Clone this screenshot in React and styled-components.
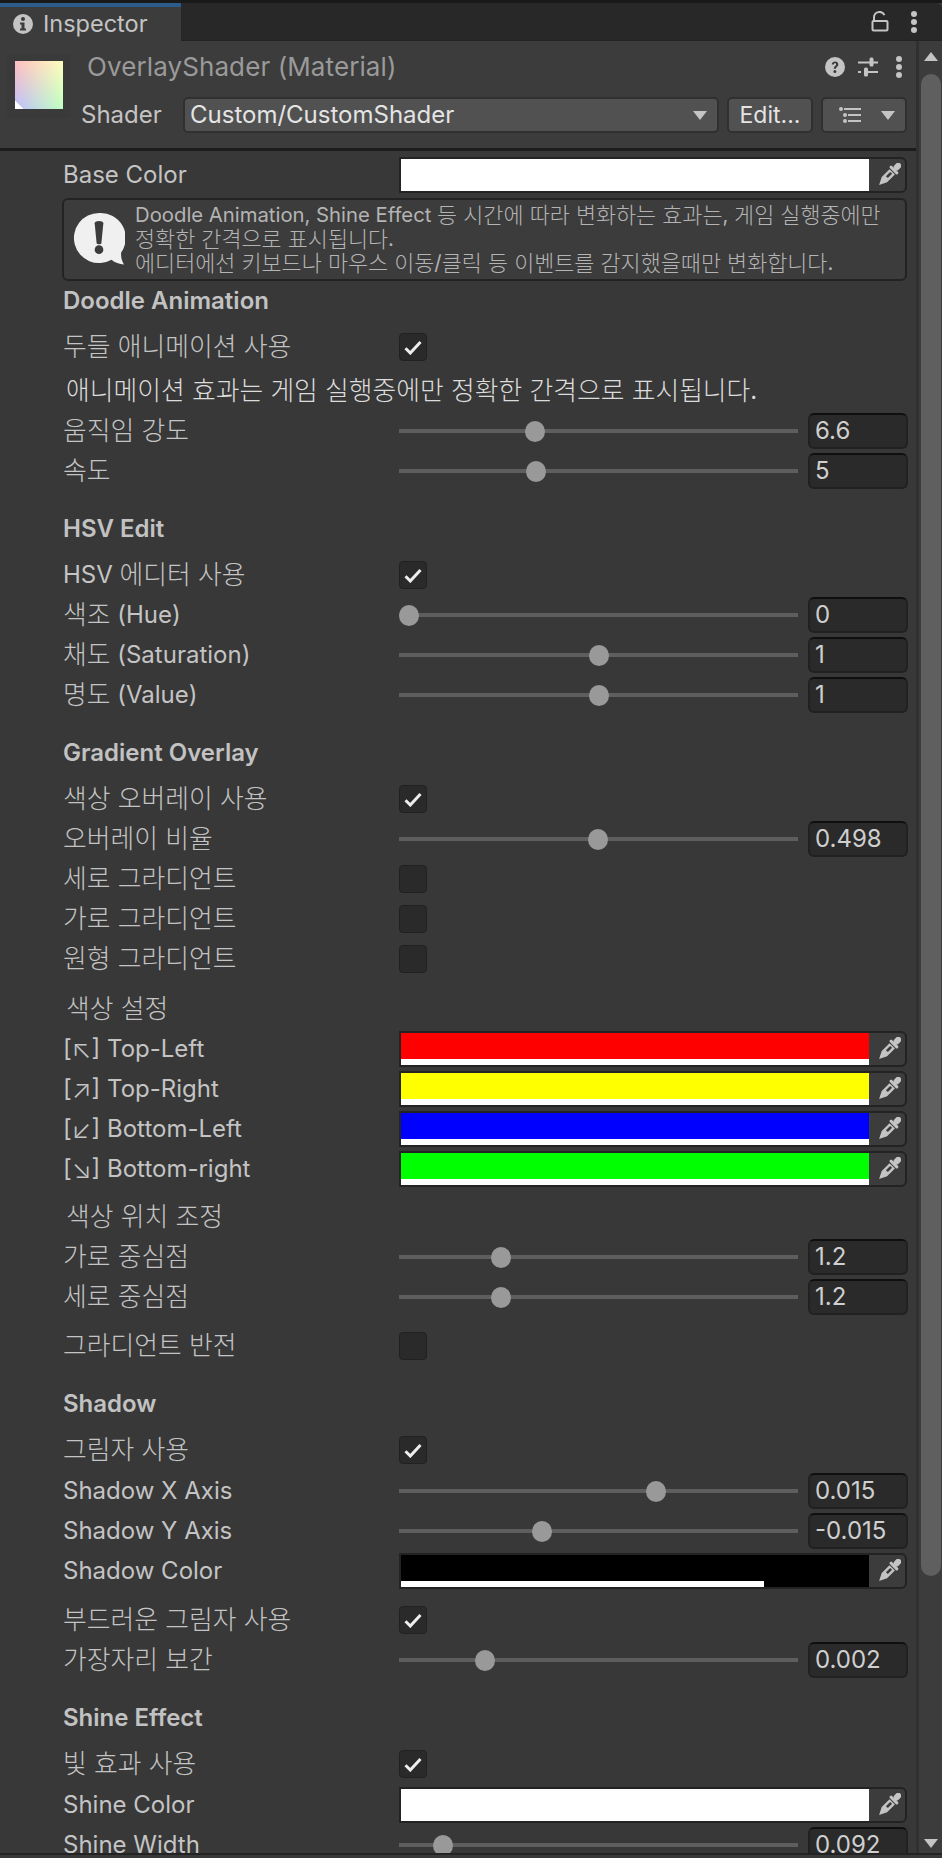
import React from "react";
import styled, { createGlobalStyle } from "styled-components";

const Global = createGlobalStyle`
  html, body { margin: 0; padding: 0; background: #383838; }
  * { box-sizing: border-box; }
`;
const Page = styled.div`
  width: 942px; height: 1858px; overflow: hidden; display: flex; flex-direction: column;
  background: #383838; color: #c4c4c4;
  font-family: Inter, "Noto Sans CJK KR", sans-serif; font-size: 24px; line-height: 1;
`;
const Ko = styled.span`font-size: 1.075em; font-weight: 300; line-height: 1; vertical-align: -1px;`;
const TopStrip = styled.div`height: 3px; background: #191919; flex: none;`;
const TabBar = styled.div`
  height: 38px; flex: none; background: #282828; display: flex; align-items: stretch; justify-content: space-between;
  border-top-right-radius: 6px; border-bottom: 1px solid #232323;
`;
const Tab = styled.div`
  width: 181px; background: #3c3c3c; border-top: 4px solid #2c5d8a; display: flex; align-items: center; gap: 10px;
  padding-left: 13px; font-size: 23.5px; color: #c4c4c4; margin-bottom: -1px;
`;
const TabTools = styled.div`display: flex; align-items: center; gap: 21px; padding-right: 24px;`;
const Main = styled.div`flex: 1; min-height: 0; display: flex;`;
const Content = styled.div`flex: 1; min-width: 0; overflow: hidden; display: flex; flex-direction: column;`;
const Header = styled.header`
  height: 110px; flex: none; background: #3c3c3c; border-bottom: 3px solid #1d1d1d; position: relative;
  display: flex; padding: 13px 9px 0 7px;
`;
const ThumbFrame = styled.div`
  width: 64px; height: 64px; flex: none; background: #3a3a3a; padding: 7px 8px;
`;
const Thumb = styled.div`
  width: 48px; height: 48px; position: relative; background: linear-gradient(to right, #ffbfbf, #ffffbf);
  &::before {
    content: ""; position: absolute; inset: 0; background: linear-gradient(to right, #bfbfff, #bfffbf);
    -webkit-mask-image: linear-gradient(to bottom, transparent, #000); mask-image: linear-gradient(to bottom, transparent, #000);
  }
  &::after {
    content: ""; position: absolute; left: 0; bottom: 0; width: 8px; height: 8px;
    background: linear-gradient(to top right, #fff 50%, transparent 50%);
  }
`;
const HeadBody = styled.div`flex: 1; min-width: 0; display: flex; flex-direction: column; padding-left: 10px;`;
const TitleRow = styled.div`height: 26px; display: flex; align-items: center; justify-content: space-between;`;
const Title = styled.div`color: #9a9a9a; font-size: 26px; padding-left: 6px; letter-spacing: 0.1px; white-space: nowrap;`;
const HeadTools = styled.div`display: flex; align-items: center; gap: 12px; padding-right: 4px;`;
const MenuDots = styled.div`display: flex; margin-left: 4px;`;
const ShaderRow = styled.div`margin-top: 17px; display: flex; align-items: center; gap: 8px;`;
const ShaderLabel = styled.div`width: 94px; flex: none; font-size: 24px; color: #c4c4c4;`;
const HeadBtn = styled.div`
  height: 36px; background: #515151; border: 2px solid #303030; border-radius: 5px; display: flex; align-items: center;
  color: #e4e4e4; font-size: ${p => p.$size || 24}px; flex: ${p => p.$grow ? 1 : "none"}; width: ${p => p.$w || "auto"};
  justify-content: ${p => p.$between ? "space-between" : "center"}; padding: ${p => p.$pad || "0"};
`;
const BtnGroup = styled.div`flex: none; display: flex; gap: 8px;`;
const Body = styled.div`padding: 4px 9px 0 63px; flex: 1; overflow: hidden;`;
const Row = styled.div`
  height: 40px; display: flex; align-items: center; margin-top: ${p => p.$mt || 0}px;
`;
const Label = styled.div`width: 336px; flex: none; white-space: nowrap; height: 40px; line-height: 40px;`;
const Heading = styled.div`
  height: 40px; line-height: 40px; font-weight: 600; font-size: 24px; color: #c2c2c2; margin-top: ${p => p.$mt || 0}px;
`;
const Note = styled.div`
  height: 40px; line-height: 40px; padding-left: 3px; margin-top: ${p => p.$mt || 0}px;
  color: ${p => p.$bright ? "#dcdcdc" : "#c4c4c4"}; white-space: nowrap;
`;
const Help = styled.div`
  height: 83px; margin: 3px 0 0 -1px; background: #3c3c3c; border: 2px solid #232323; border-radius: 6px; display: flex; align-items: center;
  padding-left: 9px; gap: 10px;
`;
const HelpText = styled.div`font-size: 20.3px; line-height: 23.5px; color: #b4b4b4; margin-top: -1px; white-space: nowrap;`;
const Check = styled.div`
  width: 28px; height: 28px; border-radius: 4px; background: #2a2a2a; border: 1px solid #212121; display: flex; align-items: center; justify-content: center;
`;
const Slider = styled.div`display: flex; align-items: center; flex: 1; gap: 10px;`;
const Track = styled.div`width: 399px; height: 4px; background: #5e5e5e; position: relative; flex: none;`;
const Knob = styled.div`position: absolute; top: -8.5px; width: 20px; height: 21px; border-radius: 50%; background: #999;`;
const NumInput = styled.div`
  width: 100px; height: 36px; flex: none; background: #2a2a2a; border: 2px solid #212121; border-top-color: #0f0f0f; border-radius: 6px;
  display: flex; align-items: center; padding-left: 5px; font-size: 24px; color: #cfcfcf;
`;
const ColorField = styled.div`
  flex: 1; height: 36px; display: flex; background: #232323; border: 2px solid #232323; border-radius: 0 6px 6px 0;
`;
const SwatchWrap = styled.div`flex: 1; background: ${p => p.$color}; display: flex; flex-direction: column; justify-content: flex-end;`;
const AlphaBar = styled.div`height: 6px; background: #fff; width: ${p => p.$w || "100%"};`;
const Picker = styled.div`width: 36px; background: #3c3c3c; display: flex; align-items: center; justify-content: center; flex: none; border-radius: 0 4px 4px 0; padding-left: 3px;`;
const Scroll = styled.aside`
  width: 26px; flex: none; background: #3c3c3c; border-left: 3px solid #303030; display: flex; flex-direction: column; align-items: center;
  padding-bottom: 5px;
`;
const ScrollThumb = styled.div`width: 20px; height: 1502px; margin-top: 13px; border-radius: 10px; background: #5f5f5f;`;
const Spacer = styled.div`flex: 1;`;
const ArrowUp = styled.div`
  margin-top: 11px; width: 0; height: 0; border-left: 7.5px solid transparent; border-right: 7.5px solid transparent; border-bottom: 9px solid #c4c4c4;
`;
const ArrowDown = styled.div`
  width: 0; height: 0; border-left: 7.5px solid transparent; border-right: 7.5px solid transparent; border-top: 9px solid #c4c4c4;
`;
const Caret = styled.div`
  width: 0; height: 0; border-left: 7.5px solid transparent; border-right: 7.5px solid transparent; border-top: 9px solid #c4c4c4;
`;
const Footer = styled.div`height: 5px; flex: none; background: #383838; border-top: 2px solid #232323;`;

const K = ({ children }) => {
  const parts = children.split(/([\uAC00-\uD7A3\u2196-\u2199]+(?:\s+[\uAC00-\uD7A3]+)*)/);
  return parts.map((p, i) => (i % 2 ? <Ko key={i}>{p}</Ko> : p));
};

const Dots = ({ color = "#c4c4c4" }) => (
  <svg width="8" height="22" viewBox="0 0 8 22"><circle cx="4" cy="3" r="3" fill={color} /><circle cx="4" cy="11" r="3" fill={color} /><circle cx="4" cy="19" r="3" fill={color} /></svg>
);
const Lock = () => (
  <svg width="18" height="21" viewBox="0 0 18 21" fill="none" stroke="#c4c4c4" strokeWidth="2">
    <rect x="1.500" y="10" width="15" height="9.500" rx="1" />
    <path d="M3 10V6.500a5.500 5.500 0 0 1 10.500-2.300" />
  </svg>
);
const InfoIcon = () => (
  <svg width="20" height="20" viewBox="0 0 20 20">
    <circle cx="10" cy="10" r="10" fill="#c4c4c4" />
    <circle cx="10" cy="5" r="2" fill="#3c3c3c" />
    <path d="M7 8.500h4.500v6H13v2H7v-2h1.500v-4H7z" fill="#3c3c3c" />
  </svg>
);
const HelpCircle = () => (
  <svg width="20" height="20" viewBox="0 0 20 20">
    <circle cx="10" cy="10" r="10" fill="#c4c4c4" />
    <path d="M6.800 7.600C6.800 5.600 8.300 4.600 10.100 4.600s3.200 1 3.200 2.800c0 2.400-2.400 2.400-2.400 4.400H8.800c0-2.900 2.300-3 2.300-4.400 0-.7-.4-1.100-1.100-1.100-.8 0-1.200.5-1.200 1.300z" fill="#3c3c3c" />
    <circle cx="9.900" cy="14.400" r="1.500" fill="#3c3c3c" />
  </svg>
);
const Sliders = () => (
  <svg width="22" height="20" viewBox="0 0 22 20" fill="#c4c4c4">
    <rect x="1" y="4.500" width="20" height="2" /><rect x="1" y="14" width="3" height="2" /><rect x="7" y="14" width="14" height="2" />
    <rect x="12.500" y="0.500" width="4" height="9" rx="1.500" /><rect x="7" y="10.500" width="4" height="9" rx="1.500" />
  </svg>
);
const ListIcon = () => (
  <svg width="22" height="16" viewBox="0 0 22 16" fill="#c4c4c4">
    <circle cx="2" cy="2" r="2" /><circle cx="6" cy="8" r="2" /><circle cx="6" cy="14" r="2" />
    <rect x="5" y="1" width="17" height="2" /><rect x="9" y="7" width="13" height="2" /><rect x="9" y="13" width="13" height="2" />
  </svg>
);
const Dropper = () => (
  <svg width="24" height="24" viewBox="0 0 24 24">
    <g transform="rotate(45 12 12)" fill="#c4c4c4">
      <rect x="9" y="-4" width="6" height="8" rx="2.500" />
      <rect x="6.500" y="3.500" width="11" height="3" rx="1.200" />
      <path d="M8.200 7.500h7.600v11L12 26l-3.800-7.500z" />
      <rect x="10.600" y="9" width="2.800" height="6" fill="#3c3c3c" />
    </g>
  </svg>
);
const Tick = () => (
  <svg width="18" height="15" viewBox="0 0 18 15" fill="none" stroke="#eee" strokeWidth="3"><path d="M1.500 8.300 6.300 13 16.500 2" /></svg>
);
const Bubble = () => (
  <svg width="52" height="56" viewBox="0 0 54 58">
    <path d="M27 1a26 26 0 1 0 13 48.500c3.500 3 8 4.500 13 5-1.800-3-3.500-6.500-3-12.500A26 26 0 0 0 27 1z" fill="#f0f0f0" />
    <path d="M22.500 11.500c0-3 9-3 9 0l-2 20.500c-.3 2-4.700 2-5 0z" fill="#3c3c3c" />
    <circle cx="27" cy="39" r="4.500" fill="#3c3c3c" />
  </svg>
);

const CheckRow = ({ label, on, mt }) => (
  <Row $mt={mt}><Label><K>{label}</K></Label><Check>{on && <Tick />}</Check></Row>
);
const SliderRow = ({ label, value, center, mt }) => (
  <Row $mt={mt}>
    <Label><K>{label}</K></Label>
    <Slider>
      <Track><Knob style={{ left: center - 10 }} /></Track>
      <NumInput>{value}</NumInput>
    </Slider>
  </Row>
);
const ColorRow = ({ label, color, bar, barW, mt }) => (
  <Row $mt={mt}>
    <Label><K>{label}</K></Label>
    <ColorField>
      <SwatchWrap $color={color}>{bar && <AlphaBar $w={barW} />}</SwatchWrap>
      <Picker><Dropper /></Picker>
    </ColorField>
  </Row>
);

export default function App() {
  return (
    <Page>
      <Global />
      <TopStrip />
      <TabBar>
        <Tab><InfoIcon />Inspector</Tab>
        <TabTools><Lock /><Dots /></TabTools>
      </TabBar>
      <Main>
        <Content>
          <Header>
            <ThumbFrame><Thumb /></ThumbFrame>
            <HeadBody>
              <TitleRow>
                <Title>OverlayShader (Material)</Title>
                <HeadTools><HelpCircle /><Sliders /><MenuDots><Dots /></MenuDots></HeadTools>
              </TitleRow>
              <ShaderRow>
                <ShaderLabel>Shader</ShaderLabel>
                <HeadBtn $grow $between $pad="0 10px 0 5px">Custom/CustomShader<Caret /></HeadBtn>
                <BtnGroup>
                  <HeadBtn $w="86px" $size={23}>Edit...</HeadBtn>
                  <HeadBtn $w="86px" $between $pad="0 10px 0 16px"><ListIcon /><Caret /></HeadBtn>
                </BtnGroup>
              </ShaderRow>
            </HeadBody>
          </Header>
          <Body>
            <ColorRow label="Base Color" color="#fff" />
            <Help>
              <Bubble />
              <HelpText>
                <K>Doodle Animation, Shine Effect 등 시간에 따라 변화하는 효과는, 게임 실행중에만</K><br />
                <K>정확한 간격으로 표시됩니다.</K><br />
                <K>에디터에선 키보드나 마우스 이동/클릭 등 이벤트를 감지했을때만 변화합니다.</K>
              </HelpText>
            </Help>
            <Heading>Doodle Animation</Heading>
            <CheckRow label="두들 애니메이션 사용" on mt={6} />
            <Note $bright $mt={4}><K>애니메이션 효과는 게임 실행중에만 정확한 간격으로 표시됩니다.</K></Note>
            <SliderRow label="움직임 강도" value="6.6" center={136} />
            <SliderRow label="속도" value="5" center={137} />

            <Heading $mt={18}>HSV Edit</Heading>
            <CheckRow label="HSV 에디터 사용" on mt={6} />
            <SliderRow label="색조 (Hue)" value="0" center={10} />
            <SliderRow label="채도 (Saturation)" value="1" center={200} />
            <SliderRow label="명도 (Value)" value="1" center={200} />

            <Heading $mt={18}>Gradient Overlay</Heading>
            <CheckRow label="색상 오버레이 사용" on mt={6} />
            <SliderRow label="오버레이 비율" value="0.498" center={199} />
            <CheckRow label="세로 그라디언트" />
            <CheckRow label="가로 그라디언트" />
            <CheckRow label="원형 그라디언트" />

            <Note $mt={10}><K>색상 설정</K></Note>
            <ColorRow label="[↖] Top-Left" color="#f00" bar />
            <ColorRow label="[↗] Top-Right" color="#ff0" bar />
            <ColorRow label="[↙] Bottom-Left" color="#00f" bar />
            <ColorRow label="[↘] Bottom-right" color="#0f0" bar />

            <Note $mt={8}><K>색상 위치 조정</K></Note>
            <SliderRow label="가로 중심점" value="1.2" center={102} />
            <SliderRow label="세로 중심점" value="1.2" center={102} />
            <CheckRow label="그라디언트 반전" mt={9} />

            <Heading $mt={18}>Shadow</Heading>
            <CheckRow label="그림자 사용" on mt={6} />
            <SliderRow label="Shadow X Axis" value="0.015" center={257} mt={1} />
            <SliderRow label="Shadow Y Axis" value="-0.015" center={143} />
            <ColorRow label="Shadow Color" color="#000" bar barW="77.500%" />
            <CheckRow label="부드러운 그림자 사용" on mt={9} />
            <SliderRow label="가장자리 보간" value="0.002" center={86} />

            <Heading $mt={18}>Shine Effect</Heading>
            <CheckRow label="빛 효과 사용" on mt={6} />
            <ColorRow label="Shine Color" color="#fff" mt={1} />
            <SliderRow label="Shine Width" value="0.092" center={44} />
          </Body>
        </Content>
        <Scroll>
          <ArrowUp />
          <ScrollThumb />
          <Spacer />
          <ArrowDown />
        </Scroll>
      </Main>
      <Footer />
    </Page>
  );
}
